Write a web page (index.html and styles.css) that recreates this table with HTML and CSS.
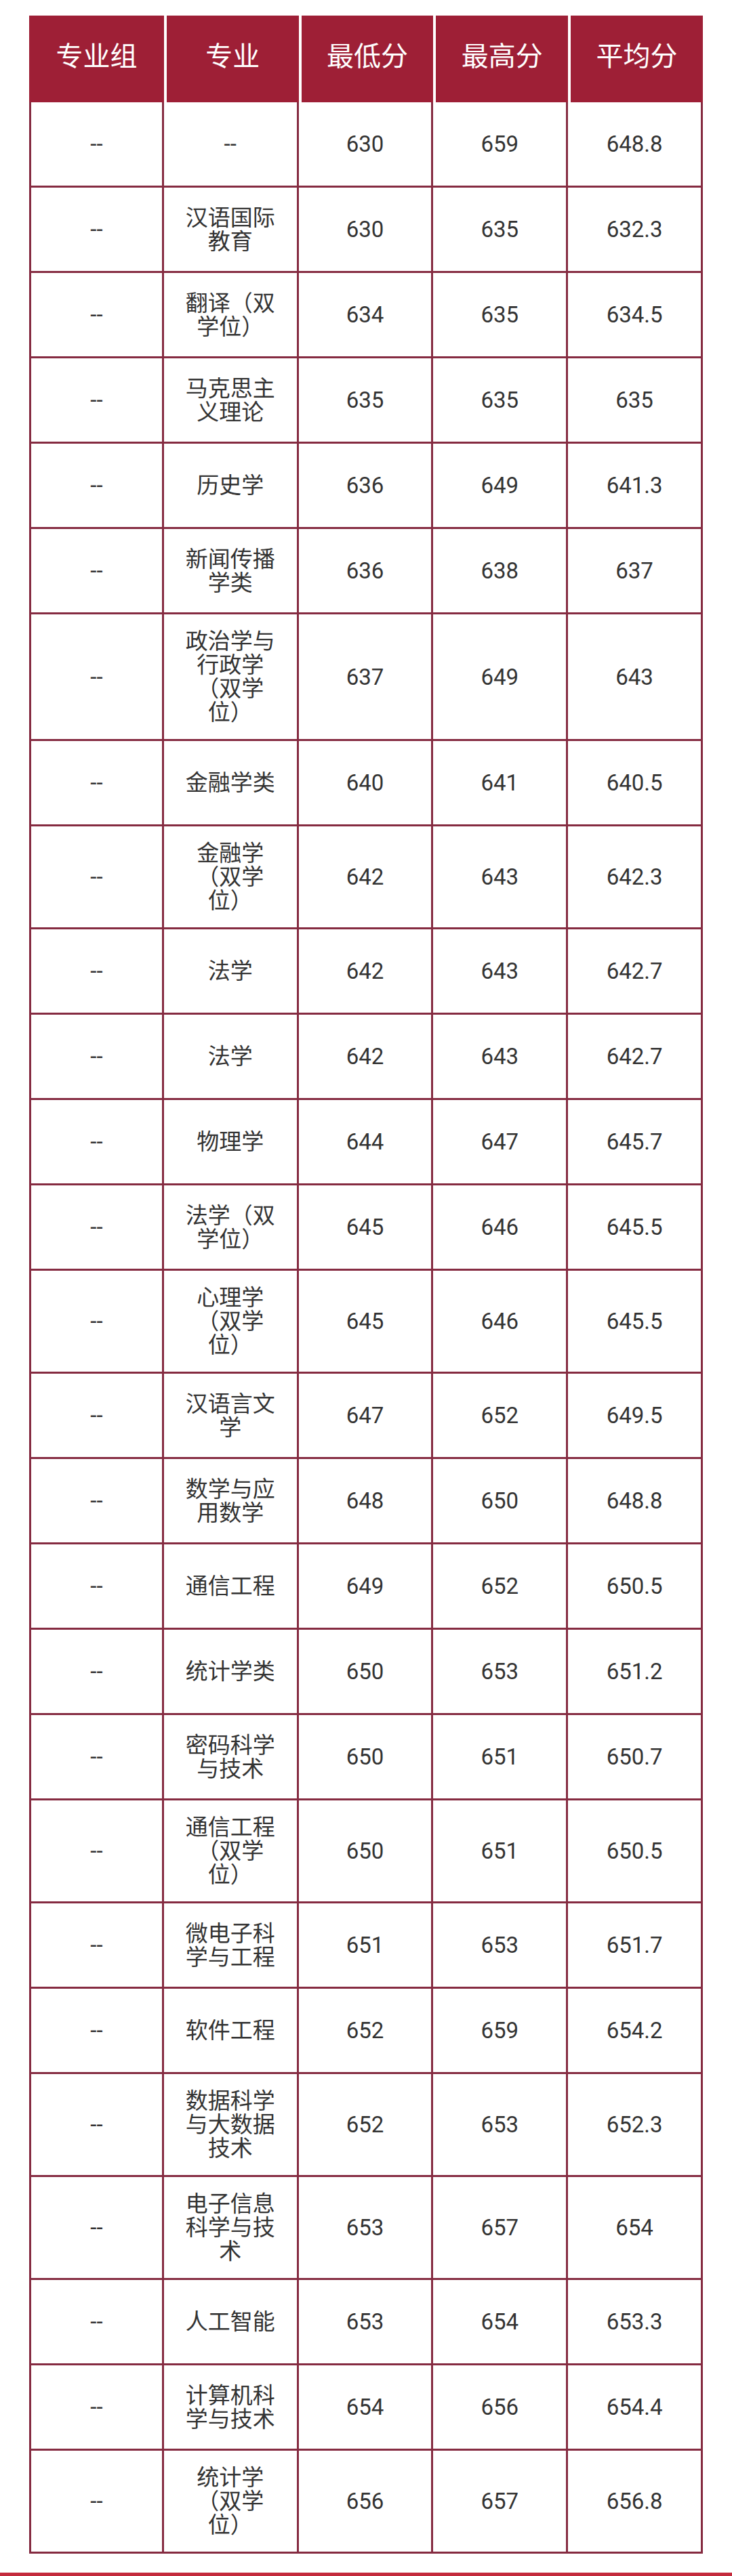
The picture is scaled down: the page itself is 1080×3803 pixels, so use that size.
FILE: index.html
```html
<!DOCTYPE html>
<html lang="zh-CN">
<head>
<meta charset="utf-8">
<title>分数表</title>
<link rel="stylesheet" href="styles.css">
</head>
<body>
<div class="page">
<table class="score-table">
<colgroup><col><col><col><col><col></colgroup>
<thead>
<tr><th>专业组</th><th>专业</th><th>最低分</th><th>最高分</th><th>平均分</th></tr>
</thead>
<tbody>
<tr><td>--</td><td>--</td><td>630</td><td>659</td><td>648.8</td></tr>
<tr><td>--</td><td>汉语国际教育</td><td>630</td><td>635</td><td>632.3</td></tr>
<tr><td>--</td><td>翻译（双学位）</td><td>634</td><td>635</td><td>634.5</td></tr>
<tr><td>--</td><td>马克思主义理论</td><td>635</td><td>635</td><td>635</td></tr>
<tr><td>--</td><td>历史学</td><td>636</td><td>649</td><td>641.3</td></tr>
<tr><td>--</td><td>新闻传播学类</td><td>636</td><td>638</td><td>637</td></tr>
<tr><td>--</td><td>政治学与行政学（双学位）</td><td>637</td><td>649</td><td>643</td></tr>
<tr><td>--</td><td>金融学类</td><td>640</td><td>641</td><td>640.5</td></tr>
<tr><td>--</td><td>金融学（双学位）</td><td>642</td><td>643</td><td>642.3</td></tr>
<tr><td>--</td><td>法学</td><td>642</td><td>643</td><td>642.7</td></tr>
<tr><td>--</td><td>法学</td><td>642</td><td>643</td><td>642.7</td></tr>
<tr><td>--</td><td>物理学</td><td>644</td><td>647</td><td>645.7</td></tr>
<tr><td>--</td><td>法学（双学位）</td><td>645</td><td>646</td><td>645.5</td></tr>
<tr><td>--</td><td>心理学（双学位）</td><td>645</td><td>646</td><td>645.5</td></tr>
<tr><td>--</td><td>汉语言文学</td><td>647</td><td>652</td><td>649.5</td></tr>
<tr><td>--</td><td>数学与应用数学</td><td>648</td><td>650</td><td>648.8</td></tr>
<tr><td>--</td><td>通信工程</td><td>649</td><td>652</td><td>650.5</td></tr>
<tr><td>--</td><td>统计学类</td><td>650</td><td>653</td><td>651.2</td></tr>
<tr><td>--</td><td>密码科学与技术</td><td>650</td><td>651</td><td>650.7</td></tr>
<tr><td>--</td><td>通信工程（双学位）</td><td>650</td><td>651</td><td>650.5</td></tr>
<tr><td>--</td><td>微电子科学与工程</td><td>651</td><td>653</td><td>651.7</td></tr>
<tr><td>--</td><td>软件工程</td><td>652</td><td>659</td><td>654.2</td></tr>
<tr><td>--</td><td>数据科学与大数据技术</td><td>652</td><td>653</td><td>652.3</td></tr>
<tr><td>--</td><td>电子信息科学与技术</td><td>653</td><td>657</td><td>654</td></tr>
<tr><td>--</td><td>人工智能</td><td>653</td><td>654</td><td>653.3</td></tr>
<tr><td>--</td><td>计算机科学与技术</td><td>654</td><td>656</td><td>654.4</td></tr>
<tr><td>--</td><td>统计学（双学位）</td><td>656</td><td>657</td><td>656.8</td></tr>
</tbody>
</table>
<div class="bottom-bar"></div>
</div>
</body>
</html>
```

FILE: styles.css
```css
html, body {
  margin: 0;
  padding: 0;
  background: #ffffff;
}

.page {
  padding: 23px 43px 0 43px;
  font-family: Roboto, "Noto Sans CJK SC", sans-serif;
  text-spacing-trim: space-all;
}

.score-table {
  width: 994px;
  border-collapse: separate;
  border-spacing: 0;
  table-layout: fixed;
}

.score-table th {
  background: #9e1f36;
  color: #ffffff;
  font-weight: 400;
  font-size: 40px;
  line-height: 48px;
  height: 128px;
  box-sizing: border-box;
  padding: 0 0 6px 0;
  border-left: 4px solid #ffffff;
  text-align: center;
  vertical-align: middle;
}

.score-table th:first-child {
  border-left: none;
}

.score-table td {
  box-sizing: border-box;
  height: 126px;
  padding: 22px 28px;
  font-size: 33px;
  line-height: 35px;
  color: #333333;
  text-align: center;
  vertical-align: middle;
  text-spacing-trim: space-all;
  border-right: 3px solid #852b41;
  border-bottom: 3px solid #852b41;
}

.score-table td:first-child {
  border-left: 3px solid #852b41;
}

.bottom-bar {
  margin: 28px -43px 0 -43px;
  height: 6px;
  background: #c42a3c;
}
```
